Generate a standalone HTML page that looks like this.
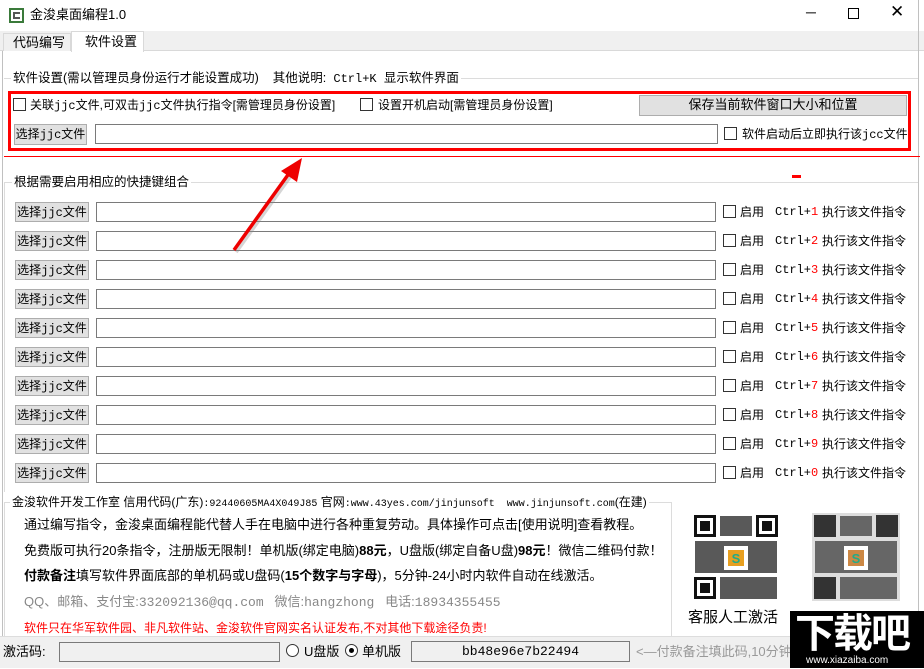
<!DOCTYPE html><html><head><meta charset="utf-8"><style>
*{margin:0;padding:0;box-sizing:border-box}
body{width:924px;height:668px;position:relative;background:#fff;font-family:"Liberation Sans","Noto Sans CJK SC",sans-serif;font-size:12px;color:#000;overflow:hidden;line-height:16px}
.a{position:absolute;white-space:nowrap;line-height:16px}
.btn{position:absolute;background:#e1e1e1;border:1px solid #adadad;text-align:center;line-height:18px;font-size:12px;white-space:nowrap}
.inp{position:absolute;background:#fff;border:1px solid #7a7a7a}
.cb{position:absolute;width:13px;height:13px;border:1px solid #333;background:#fff}
.mono{font-family:"Liberation Mono","Noto Sans CJK SC",monospace;vertical-align:baseline;line-height:1}
</style></head><body>
<div class="a" style="left:9px;top:8px;width:15px;height:15px;border:2px solid #3a7a3a"></div>
<div class="a" style="left:13px;top:12px;width:7px;height:7px;border:2px solid #555;border-right:none"></div>
<div class="a" style="left:30px;top:7px;font-size:13px">金浚桌面编程1.0</div>
<div class="a" style="left:806px;top:4px;font-size:14px">─</div>
<div class="a" style="left:848px;top:8px;width:11px;height:11px;border:1px solid #000"></div>
<div class="a" style="left:890px;top:4px;font-size:17px">✕</div>
<div class="a" style="left:0;top:31px;width:924px;height:20px;background:#f0f0f0;border-bottom:1px solid #d9d9d9"></div>
<div class="a" style="left:3px;top:33px;width:68px;height:18px;background:#f0f0f0;border:1px solid #d9d9d9;border-bottom:none;padding-left:9px;line-height:17px;font-size:13px">代码编写</div>
<div class="a" style="left:71px;top:31px;width:73px;height:21px;background:#fff;border:1px solid #d9d9d9;border-bottom:none;padding-left:13px;line-height:20px;font-size:13px">软件设置</div>
<div class="a" style="left:2px;top:51px;width:1px;height:585px;background:#c0c0c0"></div>
<div class="a" style="left:918px;top:0;width:1px;height:636px;background:#c0c0c0"></div>
<div class="a" style="left:4px;top:78px;width:914px;height:1px;background:#dcdcdc"></div>
<div class="a" style="left:11px;top:70px;background:#fff;padding:0 2px;font-size:12.5px">软件设置(需以管理员身份运行才能设置成功)&nbsp;&nbsp;&nbsp;&nbsp;其他说明:<span class="mono" style="font-size:12px"> Ctrl+K </span>显示软件界面</div>
<div class="a" style="left:8px;top:91px;width:903px;height:60px;border:3px solid #f00"></div>
<div class="cb" style="left:13px;top:98px"></div>
<div class="a" style="left:30px;top:97px">关联<span class="mono">jjc</span>文件,可双击<span class="mono">jjc</span>文件执行指令[需管理员身份设置]</div>
<div class="cb" style="left:360px;top:98px"></div>
<div class="a" style="left:378px;top:97px">设置开机启动[需管理员身份设置]</div>
<div class="btn" style="left:639px;top:95px;width:268px;height:21px;font-size:13px">保存当前软件窗口大小和位置</div>
<div class="btn" style="left:14px;top:124px;width:73px;height:21px">选择<span class="mono">jjc</span>文件</div>
<div class="inp" style="left:95px;top:124px;width:623px;height:20px"></div>
<div class="cb" style="left:724px;top:127px"></div>
<div class="a" style="left:742px;top:126px">软件启动后立即执行该<span class="mono">jcc</span>文件</div>
<div class="a" style="left:4px;top:156px;width:916px;height:1px;background:#f00"></div>
<div class="a" style="left:792px;top:175px;width:9px;height:3px;background:#f00"></div>
<div class="a" style="left:4px;top:182px;width:914px;height:1px;background:#dcdcdc"></div>
<div class="a" style="left:4px;top:182px;width:1px;height:310px;background:#dcdcdc"></div>
<div class="a" style="left:12px;top:174px;background:#fff;padding:0 2px;font-size:12.5px">根据需要启用相应的快捷键组合</div>
<div id="rows"></div>
<svg class="a" style="left:0;top:0" width="924" height="668"><line x1="236" y1="252" x2="292" y2="174" stroke="#888" stroke-width="4" opacity=".35"/><line x1="234" y1="250" x2="290" y2="172" stroke="#e00" stroke-width="3.5"/><polygon points="302,158 281,171 297,182" fill="#e00"/></svg>
<div class="a" style="left:4px;top:502px;width:668px;height:134px;border:1px solid #dcdcdc;border-bottom:none"></div>
<div class="a" style="left:10px;top:494px;background:#fff;padding:0 2px;font-size:12px">金浚软件开发工作室 信用代码(广东)<span class="mono" style="font-size:10px">:92440605MA4X049J85</span> 官网<span class="mono" style="font-size:10px">:www.43yes.com/jinjunsoft&nbsp;&nbsp;www.jinjunsoft.com</span>(在建)</div>
<div class="a" style="left:24px;top:517px;font-size:13px">通过编写指令，金浚桌面编程能代替人手在电脑中进行各种重复劳动。具体操作可点击[使用说明]查看教程。</div>
<div class="a" style="left:24px;top:543px;font-size:13px">免费版可执行20条指令，注册版无限制！单机版(绑定电脑)<b>88元</b>，U盘版(绑定自备U盘)<b>98元</b>！微信二维码付款！</div>
<div class="a" style="left:24px;top:568px;font-size:13px"><b>付款备注</b>填写软件界面底部的单机码或U盘码(<b>15个数字与字母</b>)，5分钟-24小时内软件自动在线激活。</div>
<div class="a" style="left:24px;top:594px;color:#888;font-size:13px">QQ、邮箱、支付宝:<span class="mono">332092136@qq.com</span>&nbsp;&nbsp;&nbsp;微信:<span class="mono">hangzhong</span>&nbsp;&nbsp;&nbsp;电话:<span class="mono">18934355455</span></div>
<div class="a" style="left:24px;top:620px;color:#f00;font-size:12px">软件只在华军软件园、非凡软件站、金浚软件官网实名认证发布,不对其他下载途径负责!</div>
<svg class="a" style="left:692px;top:513px" width="88" height="88"><rect width="88" height="88" fill="#fff"/><g fill="#111"><rect x="2" y="2" width="22" height="22"/><rect x="64" y="2" width="22" height="22"/><rect x="2" y="64" width="22" height="22"/></g><g fill="#fff"><rect x="5" y="5" width="16" height="16"/><rect x="67" y="5" width="16" height="16"/><rect x="5" y="67" width="16" height="16"/></g><g fill="#111"><rect x="8" y="8" width="10" height="10"/><rect x="70" y="8" width="10" height="10"/><rect x="8" y="70" width="10" height="10"/></g><g fill="#222" opacity=".75"><rect x="28" y="3" width="32" height="20"/><rect x="3" y="28" width="82" height="32"/><rect x="28" y="64" width="57" height="22"/></g><rect x="32" y="33" width="24" height="24" fill="#fff"/><rect x="36" y="37" width="16" height="16" fill="#e8a020"/><text x="44" y="50" font-size="13" text-anchor="middle" fill="#2a8" font-weight="bold">S</text></svg>
<svg class="a" style="left:812px;top:513px" width="88" height="88"><rect width="88" height="88" fill="#ddd"/><g fill="#333"><rect x="2" y="2" width="22" height="22"/><rect x="64" y="2" width="22" height="22"/><rect x="2" y="64" width="22" height="22"/><rect x="28" y="3" width="32" height="20" opacity=".7"/><rect x="3" y="28" width="82" height="32" opacity=".7"/><rect x="28" y="64" width="57" height="22" opacity=".7"/></g><rect x="32" y="33" width="24" height="24" fill="#fff"/><rect x="36" y="37" width="16" height="16" fill="#c84"/><text x="44" y="50" font-size="13" text-anchor="middle" fill="#2a8" font-weight="bold">S</text></svg>
<div class="a" style="left:688px;top:610px;font-size:15px">客服人工激活</div>
<div class="a" style="left:0;top:636px;width:924px;height:32px;background:#f0f0f0;border-top:1px solid #ddd"></div>
<div class="a" style="left:3px;top:644px;font-size:13px">激活码:</div>
<div class="a" style="left:59px;top:642px;width:221px;height:20px;background:#f0f0f0;border:1px solid #7a7a7a"></div>
<div class="a" style="left:286px;top:644px;width:13px;height:13px;border:1px solid #333;border-radius:50%;background:#fff"></div>
<div class="a" style="left:304px;top:644px;font-size:13px">U盘版</div>
<div class="a" style="left:345px;top:644px;width:13px;height:13px;border:1px solid #333;border-radius:50%;background:#fff"></div>
<div class="a" style="left:349px;top:648px;width:5px;height:5px;border-radius:50%;background:#000"></div>
<div class="a" style="left:362px;top:644px;font-size:13px">单机版</div>
<div class="a mono" style="left:411px;top:641px;width:219px;height:21px;background:#f0f0f0;border:1px solid #7a7a7a;text-align:center;line-height:19px;font-size:13px">bb48e96e7b22494</div>
<div class="a" style="left:636px;top:644px;color:#999;font-size:13px">&lt;—付款备注填此码,10分钟</div>
<div class="a" style="left:790px;top:611px;width:134px;height:57px;background:#000"></div>
<div class="a" style="left:795px;top:612px;color:#fff;font-size:40px;font-weight:bold;letter-spacing:-2px;line-height:44px">下载吧</div>
<div class="a" style="left:806px;top:653px;color:#fff;font-size:10px">www.xiazaiba.com</div>
<script>
var h='';for(var i=0;i<10;i++){var y=202+i*29;var k=i<9?(i+1):0;
h+='<div class="btn" style="left:15px;top:'+y+'px;width:74px;height:20px">选择<span class="mono">jjc</span>文件</div>'+
'<div class="inp" style="left:96px;top:'+y+'px;width:620px;height:20px"></div>'+
'<div class="cb" style="left:723px;top:'+(y+3)+'px"></div>'+
'<div class="a" style="left:740px;top:'+(y+2)+'px">启用</div>'+
'<div class="a mono" style="left:775px;top:'+(y+2)+'px;line-height:16px">Ctrl+<span style="color:#f00">'+k+'</span></div>'+
'<div class="a" style="left:822px;top:'+(y+2)+'px">执行该文件指令</div>';}
document.getElementById('rows').innerHTML=h;
</script>
</body></html>
